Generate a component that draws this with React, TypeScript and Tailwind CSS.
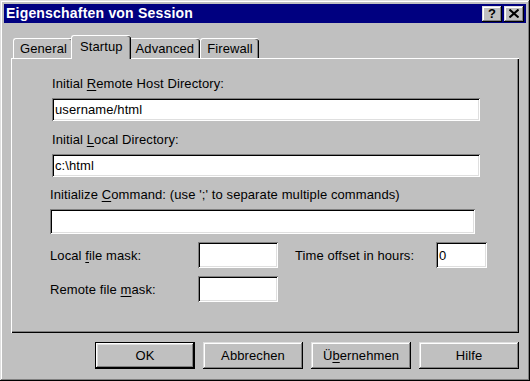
import type { ReactNode } from "react";

/*
 * Win95-style property sheet: "Eigenschaften von Session", Startup tab.
 * Bevels are drawn with stacked inset shadows.
 */
const RAISED =
  "shadow-[inset_-1px_-1px_#000,inset_1px_1px_#dfdfdf,inset_-2px_-2px_#808080,inset_2px_2px_#fff]";
const SUNKEN =
  "shadow-[inset_1px_1px_#808080,inset_-1px_-1px_#fff,inset_2px_2px_#000,inset_-2px_-2px_#dfdfdf]";

const TABS = ["General", "Startup", "Advanced", "Firewall"] as const;

function U({ children }: { children: ReactNode }) {
  return <span className="underline underline-offset-2">{children}</span>;
}

function Field({ value = "", className }: { value?: string; className: string }) {
  return (
    <div className={`bg-white px-[3px] flex items-center ${SUNKEN} ${className}`}>
      {value}
    </div>
  );
}

function Tab({ label, active }: { label: string; active: boolean }) {
  return (
    <div
      className={
        active
          ? "relative z-10 -mx-[2px] h-[24px] bg-[#c0c0c0] px-[8px] pt-[3px] border-t border-l border-white shadow-[inset_-1px_0_#000,inset_-2px_0_#808080] rounded-t-[3px]"
          : "mt-[3px] h-[20px] bg-[#c0c0c0] px-[6px] pt-[2px] border-t border-l border-white shadow-[inset_-1px_0_#000,inset_-2px_0_#808080] rounded-t-[3px]"
      }
    >
      {label}
    </div>
  );
}

function Button({ children, def }: { children: ReactNode; def?: boolean }) {
  return (
    <div
      className={`flex h-[27px] w-[100px] items-center justify-center bg-[#c0c0c0] ${
        def
          ? "border border-black shadow-[inset_-1px_-1px_#000,inset_1px_1px_#fff,inset_-2px_-2px_#808080,inset_2px_2px_#dfdfdf]"
          : RAISED
      }`}
    >
      {children}
    </div>
  );
}

export default function App() {
  return (
    <div
      className={`flex h-[381px] w-[530px] flex-col bg-[#c0c0c0] p-[4px] text-[13px] leading-[15px] tracking-[0.1px] text-black font-['Liberation_Sans',Arial,sans-serif] shadow-[inset_-1px_-1px_#000,inset_1px_1px_#dfdfdf,inset_-2px_-2px_#808080,inset_2px_2px_#fff]`}
    >
      {/* title bar */}
      <div className="flex h-[19px] items-center bg-[#000080] pl-[2px] pr-[2px]">
        <span className="text-[14px] font-bold tracking-[0.2px] text-white">Eigenschaften von Session</span>
        <div className="ml-auto flex gap-[2px]">
          <div className={`flex h-[16px] w-[20px] items-center justify-center bg-[#c0c0c0] text-[13px] font-bold ${RAISED}`}>
            ?
          </div>
          <div className={`flex h-[16px] w-[20px] items-center justify-center bg-[#c0c0c0] ${RAISED}`}>
            <svg width="10" height="9" viewBox="0 0 10 9">
              <path d="M0.5 0.5 L9.5 8.5 M9.5 0.5 L0.5 8.5" stroke="#000" strokeWidth="2" />
            </svg>
          </div>
        </div>
      </div>

      {/* tabs */}
      <div className="ml-[9px] mt-[12px] flex h-[23px] items-start">
        {TABS.map((t) => (
          <Tab key={t} label={t} active={t === "Startup"} />
        ))}
      </div>

      {/* page */}
      <div className="mx-[7px] h-[275px] border-t border-l border-white shadow-[inset_-1px_-1px_#000,inset_-2px_-2px_#808080] pl-[40px] pt-[17px]">
        <div>
          Initial <U>R</U>emote Host Directory:
        </div>
        <Field value="username/html" className="mt-[7px] h-[23px] w-[428px]" />
        <div className="mt-[11px]">
          Initial <U>L</U>ocal Directory:
        </div>
        <Field value="c:\html" className="mt-[7px] h-[23px] w-[428px]" />
        <div className="-ml-[2px] mt-[10px]">
          Initialize <U>C</U>ommand: (use &apos;;&apos; to separate multiple commands)
        </div>
        <Field className="-ml-[2px] mt-[7px] h-[25px] w-[425px]" />
        <div className="-ml-[2px] mt-[8px] flex items-center">
          <span className="w-[148px]">
            Local <U>f</U>ile mask:
          </span>
          <Field className="h-[26px] w-[80px]" />
          <span className="ml-[17px] w-[141px]">Time offset in hours:</span>
          <Field value="0" className="h-[26px] w-[51px]" />
        </div>
        <div className="-ml-[2px] mt-[8px] flex items-center">
          <span className="w-[148px]">
            Remote file <U>m</U>ask:
          </span>
          <Field className="h-[26px] w-[80px]" />
        </div>
      </div>

      {/* buttons */}
      <div className="mr-[7px] mt-[9px] flex justify-end gap-[8px]">
        <Button def>OK</Button>
        <Button>Abbrechen</Button>
        <Button>
          Ü<U>b</U>ernehmen
        </Button>
        <Button>Hilfe</Button>
      </div>
    </div>
  );
}
